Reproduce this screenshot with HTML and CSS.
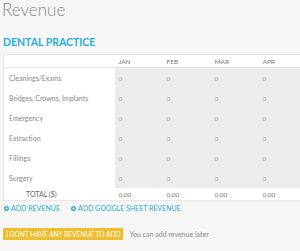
FILE: index.html
```html
<!DOCTYPE html>
<html lang="en">
<head>
    <meta charset="UTF-8">
    <title>Revenue</title>
    <link rel="stylesheet" href="styles.css">
</head>
<body>
    <h1 class="page-title">Revenue</h1>

    <div class="section">
        <h2>DENTAL PRACTICE</h2>
        <table class="revenue-table">
            <colgroup>
                <col class="label-width">
                <col class="month-width">
                <col class="month-width">
                <col class="month-width">
                <col>
            </colgroup>
            <thead>
                <tr>
                    <th class="label-col"></th>
                    <th>JAN</th>
                    <th>FEB</th>
                    <th>MAR</th>
                    <th>APR</th>
                </tr>
            </thead>
            <tbody>
                <tr><td class="label-col">Cleanings/Exams</td><td>0</td><td>0</td><td>0</td><td>0</td></tr>
                <tr><td class="label-col">Bridges, Crowns, Implants</td><td>0</td><td>0</td><td>0</td><td>0</td></tr>
                <tr><td class="label-col">Emergency</td><td>0</td><td>0</td><td>0</td><td>0</td></tr>
                <tr><td class="label-col">Extraction</td><td>0</td><td>0</td><td>0</td><td>0</td></tr>
                <tr><td class="label-col">Fillings</td><td>0</td><td>0</td><td>0</td><td>0</td></tr>
                <tr><td class="label-col">Surgery</td><td>0</td><td>0</td><td>0</td><td>0</td></tr>
            </tbody>
            <tfoot>
                <tr>
                    <td class="label-col total-label">TOTAL ($)</td>
                    <td>0.00</td><td>0.00</td><td>0.00</td><td>0.00</td>
                </tr>
            </tfoot>
        </table>

        <div class="links">
            <a href="#"><span class="plus">+</span>ADD REVENUE</a>
            <a href="#"><span class="plus">+</span>ADD GOOGLE SHEET REVENUE</a>
        </div>

        <div class="actions">
            <button class="no-revenue">I DONT HAVE ANY REVENUE TO ADD</button>
            <span class="hint">You can add revenue later</span>
        </div>
    </div>
</body>
</html>
```

FILE: styles.css
```css
body {
    margin: 0;
    background-color: #f6f6f6;
    font-family: Lato, "Liberation Sans", sans-serif;
}
.page-title {
    margin: 0;
    padding: 0 0 0 2px;
    font-size: 17px;
    font-weight: 300;
    line-height: 20px;
    color: #888;
}
.section {
    padding: 0 0 0 3px;
}
.section h2 {
    margin: 16px 0 6px 0;
    font-size: 10.5px;
    font-weight: 700;
    line-height: 12px;
    color: #2aaed8;
}
.revenue-table {
    border-collapse: collapse;
    background-color: #fff;
    border: 1px solid #e8e8e8;
    border-right: none;
    table-layout: fixed;
    width: 297px;
}
.label-width {
    width: 111px;
}
.month-width {
    width: 48px;
}
.revenue-table th,
.revenue-table td {
    padding: 0 0 0 4px;
    text-align: left;
    font-size: 6.5px;
    color: #aaa;
    white-space: nowrap;
}
.revenue-table th {
    height: 12px;
    font-weight: 400;
    color: #777;
    border-bottom: 1px solid #e6e6e6;
}
.revenue-table tbody td {
    height: 20px;
    background-color: #ececec;
}
.revenue-table .label-col {
    padding-left: 5px;
    font-size: 7px;
    color: #888;
    background-color: #fff;
}
.revenue-table tfoot td {
    height: 12px;
    color: #777;
    font-size: 6.5px;
}
.revenue-table .total-label {
    padding-left: 22px;
    color: #666;
}
.links {
    display: flex;
    gap: 11px;
    margin: 3px 0 0 1px;
}
.links a {
    display: flex;
    align-items: center;
    gap: 2px;
    font-size: 7px;
    color: #2aaed8;
    text-decoration: none;
}
.plus {
    display: inline-flex;
    align-items: center;
    justify-content: center;
    width: 5px;
    height: 5px;
    border-radius: 50%;
    background-color: #2aaed8;
    color: #fff;
    font-size: 5px;
    font-weight: 700;
    line-height: 5px;
}
.actions {
    display: flex;
    align-items: center;
    gap: 6px;
    margin-top: 16px;
}
.no-revenue {
    border: none;
    background-color: #f0bd2c;
    color: #fff;
    font-family: Lato, "Liberation Sans", sans-serif;
    font-size: 6.6px;
    padding: 0 3px;
    height: 12px;
}
.hint {
    font-size: 7px;
    color: #888;
}
```
